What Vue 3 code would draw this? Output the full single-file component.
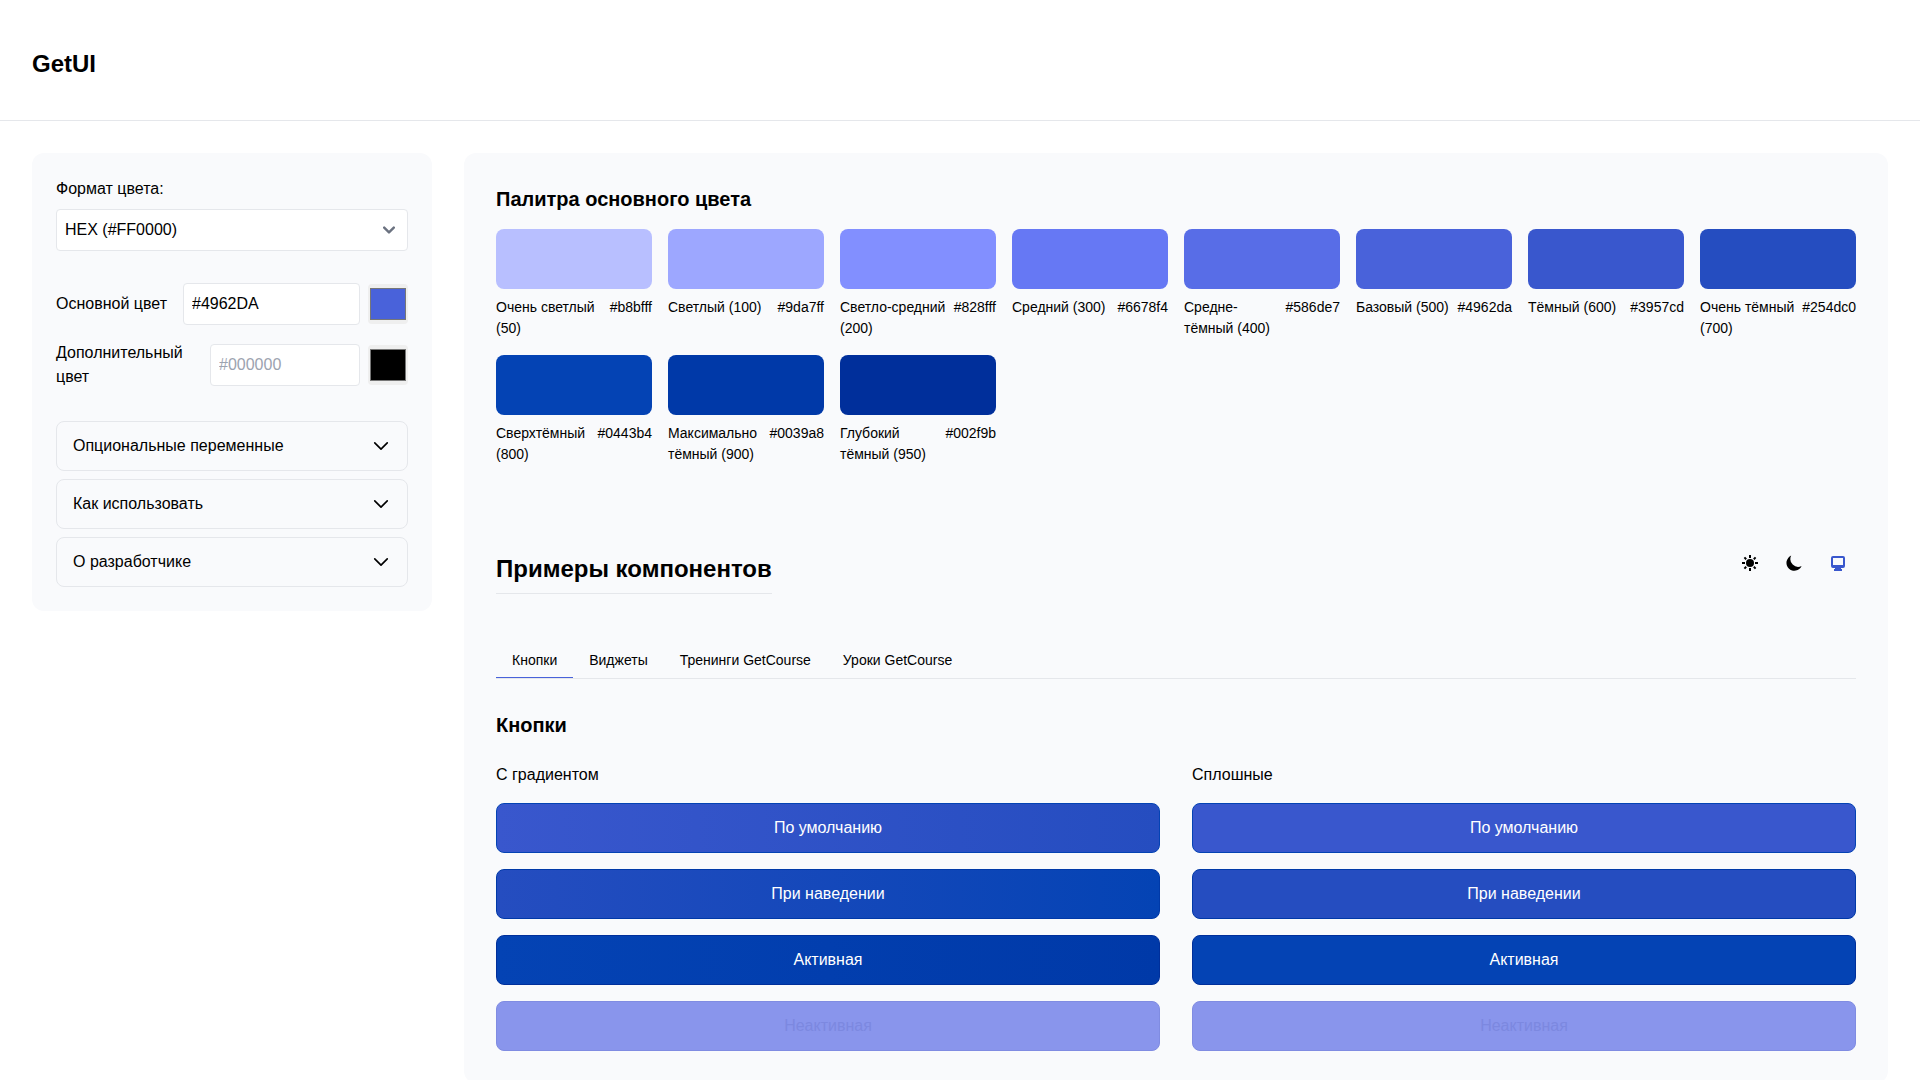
<script setup>
import { ref } from 'vue'

const format = ref('hex')
const primary = ref('#4962DA')
const secondary = ref('')
const theme = ref('system')
const activeTab = ref('Кнопки')

const sections = ['Опциональные переменные', 'Как использовать', 'О разработчике']

const palette = [
  { name: 'Очень светлый (50)', hex: '#b8bfff' },
  { name: 'Светлый (100)', hex: '#9da7ff' },
  { name: 'Светло-средний (200)', hex: '#828fff' },
  { name: 'Средний (300)', hex: '#6678f4' },
  { name: 'Средне-тёмный (400)', hex: '#586de7' },
  { name: 'Базовый (500)', hex: '#4962da' },
  { name: 'Тёмный (600)', hex: '#3957cd' },
  { name: 'Очень тёмный (700)', hex: '#254dc0' },
  { name: 'Сверхтёмный (800)', hex: '#0443b4' },
  { name: 'Максимально тёмный (900)', hex: '#0039a8' },
  { name: 'Глубокий тёмный (950)', hex: '#002f9b' },
]

const tabs = ['Кнопки', 'Виджеты', 'Тренинги GetCourse', 'Уроки GetCourse']

const states = [
  { id: 'default', label: 'По умолчанию' },
  { id: 'hover', label: 'При наведении' },
  { id: 'active', label: 'Активная' },
  { id: 'disabled', label: 'Неактивная' },
]

const groups = [
  { id: 'gradient', title: 'С градиентом' },
  { id: 'solid', title: 'Сплошные' },
]
</script>

<template>
  <div class="page">
    <header class="header">
      <h1>GetUI</h1>
    </header>

    <div class="layout">
      <aside class="sidebar">
        <div class="field">
          <label for="format">Формат цвета:</label>
          <select id="format" v-model="format" class="control select">
            <option value="hex">HEX (#FF0000)</option>
            <option value="rgb">RGB (255, 0, 0)</option>
          </select>
        </div>

        <div class="colors">
          <div class="color-row">
            <label for="primary">Основной цвет</label>
            <div class="color-inputs">
              <input id="primary" v-model="primary" type="text" class="control" placeholder="#000000" />
              <input type="color" value="#4962da" aria-label="Выбор основного цвета" />
            </div>
          </div>
          <div class="color-row">
            <label for="secondary">Дополнительный цвет</label>
            <div class="color-inputs">
              <input id="secondary" v-model="secondary" type="text" class="control" placeholder="#000000" />
              <input type="color" value="#000000" aria-label="Выбор дополнительного цвета" />
            </div>
          </div>
        </div>

        <div class="accordion">
          <button v-for="s in sections" :key="s" type="button" class="accordion-item" aria-expanded="false">
            <span>{{ s }}</span>
            <svg width="20" height="20" viewBox="0 0 24 24" fill="none" stroke="currentColor" stroke-width="2" stroke-linecap="round" stroke-linejoin="round" aria-hidden="true">
              <path d="m19.5 8.25-7.5 7.5-7.5-7.5" />
            </svg>
          </button>
        </div>
      </aside>

      <main class="content">
        <section class="palette-section">
          <h3>Палитра основного цвета</h3>
          <div class="palette">
            <div v-for="c in palette" :key="c.hex" class="tone">
              <div class="tone-fill" :style="{ backgroundColor: c.hex }"></div>
              <div class="tone-text">
                <span>{{ c.name }}</span>
                <span>{{ c.hex }}</span>
              </div>
            </div>
          </div>
        </section>

        <div class="examples-head">
          <h2>Примеры компонентов</h2>
          <div class="themes">
            <button type="button" aria-label="Светлая тема" :class="{ chosen: theme === 'light' }" @click="theme = 'light'">
              <svg width="16" height="16" viewBox="0 0 16 16" fill="currentColor" aria-hidden="true">
                <circle cx="8" cy="8" r="4" />
                <path d="M8 0v3M8 13v3M0 8h3M13 8h3M2.4 2.4l1.8 1.8M11.8 11.8l1.8 1.8M2.4 13.6l1.8-1.8M11.8 4.2l1.8-1.8" stroke="currentColor" stroke-width="2" />
              </svg>
            </button>
            <button type="button" aria-label="Тёмная тема" :class="{ chosen: theme === 'dark' }" @click="theme = 'dark'">
              <svg width="16" height="16" viewBox="0 0 16 16" fill="currentColor" aria-hidden="true">
                <path d="M5.2.6A7.9 7.9 0 1 0 15.6 11 7.8 7.8 0 0 1 5.2.6Z" />
              </svg>
            </button>
            <button type="button" aria-label="Системная тема" :class="{ chosen: theme === 'system' }" @click="theme = 'system'">
              <svg width="16" height="16" viewBox="0 0 16 16" fill="currentColor" fill-rule="evenodd" aria-hidden="true">
                <path d="M3 1h10a2 2 0 0 1 2 2v8a2 2 0 0 1-2 2h-2v1h1v2H4v-2h1v-1H3a2 2 0 0 1-2-2V3a2 2 0 0 1 2-2Zm0 2v7h10V3H3Z" />
              </svg>
            </button>
          </div>
        </div>

        <nav class="tabs" role="tablist">
          <button v-for="t in tabs" :key="t" type="button" role="tab" :aria-selected="t === activeTab" @click="activeTab = t">{{ t }}</button>
        </nav>

        <section class="buttons-section">
          <h3>Кнопки</h3>
          <div class="groups">
            <div v-for="g in groups" :key="g.id" class="group" :class="g.id">
              <p>{{ g.title }}</p>
              <button v-for="s in states" :key="s.id" type="button" class="btn" :class="s.id" :disabled="s.id === 'disabled'">{{ s.label }}</button>
            </div>
          </div>
        </section>
      </main>
    </div>
  </div>
</template>

<style>
body {
  margin: 0;
  background: #fff;
}
</style>

<style scoped>
.page,
.page * {
  box-sizing: border-box;
}

.page {
  color: #000;
  font-family: "Liberation Sans", Arial, sans-serif;
  font-size: 16px;
  line-height: 24px;
}

h1,
h2,
h3,
p {
  margin: 0;
}

button,
input,
select {
  margin: 0;
  font: inherit;
  color: inherit;
}

button {
  padding: 0;
  border: 0;
  background: none;
  cursor: pointer;
}

.header {
  padding: 48px 32px 40px;
  border-bottom: 1px solid #e5e7eb;
}

h1,
h2 {
  font-size: 24px;
  line-height: 32px;
}

h3 {
  font-size: 20px;
  line-height: 28px;
}

.layout {
  display: grid;
  grid-template-columns: 400px minmax(0, 1fr);
  align-items: start;
  gap: 32px;
  padding: 32px;
}

.sidebar,
.content {
  border-radius: 12px;
  background: #f9fafc;
}

.sidebar {
  display: flex;
  flex-direction: column;
  gap: 32px;
  padding: 24px;
}

.field {
  display: flex;
  flex-direction: column;
  gap: 8px;
}

.control {
  width: 100%;
  min-width: 0;
  height: 42px;
  padding: 8px;
  border: 1px solid #e5e7eb;
  border-radius: 4px;
  background-color: #fff;
}

.control::placeholder {
  color: #9ca3af;
}

.select {
  appearance: none;
  background-image: url("data:image/svg+xml,%3Csvg xmlns='http://www.w3.org/2000/svg' fill='none' viewBox='0 0 10 6'%3E%3Cpath stroke='%236b7280' stroke-linecap='round' stroke-linejoin='round' stroke-width='2' d='m1 1 4 4 4-4'/%3E%3C/svg%3E");
  background-repeat: no-repeat;
  background-position: right 12px center;
  background-size: 12px 12px;
}

.colors {
  display: flex;
  flex-direction: column;
  gap: 16px;
}

.color-row {
  display: flex;
  align-items: center;
  gap: 16px;
}

.color-row label {
  flex: none;
  max-width: 138px;
}

.color-inputs {
  display: flex;
  flex: 1;
  align-items: center;
  gap: 8px;
  min-width: 0;
}

input[type="color"] {
  flex: none;
  width: 40px;
  height: 40px;
  padding: 0;
  border: 0;
  border-radius: 4px;
  background: #efefef;
}

.accordion {
  display: flex;
  flex-direction: column;
  gap: 8px;
}

.accordion-item {
  display: flex;
  align-items: center;
  justify-content: space-between;
  padding: 12px 16px;
  border: 1px solid #e5e7eb;
  border-radius: 8px;
  text-align: left;
}

.content {
  padding: 32px;
}

.palette-section {
  display: flex;
  flex-direction: column;
  gap: 16px;
}

.palette {
  display: grid;
  grid-template-columns: repeat(8, minmax(0, 1fr));
  gap: 16px;
}

.tone {
  display: flex;
  flex-direction: column;
  gap: 8px;
}

.tone-fill {
  height: 60px;
  border-radius: 8px;
}

.tone-text {
  display: flex;
  justify-content: space-between;
  font-size: 14px;
  line-height: 21px;
}

.examples-head {
  display: flex;
  align-items: flex-start;
  justify-content: space-between;
  margin-top: 80px;
}

h2 {
  margin-top: 8px;
  padding-bottom: 8px;
  border-bottom: 1px solid #e5e7eb;
}

.themes {
  display: flex;
  gap: 8px;
}

.themes button {
  display: flex;
  padding: 10px;
}

.themes .chosen {
  color: #3957cd;
}

.tabs {
  display: flex;
  margin-top: 48px;
  border-bottom: 1px solid #e5e7eb;
}

.tabs button {
  padding: 8px 16px 7px;
  border-bottom: 1px solid transparent;
  font-size: 14px;
  line-height: 20px;
}

.tabs button[aria-selected="true"] {
  border-bottom-color: #4962da;
}

.buttons-section {
  display: flex;
  flex-direction: column;
  gap: 24px;
  margin-top: 32px;
}

.groups {
  display: grid;
  grid-template-columns: repeat(2, minmax(0, 1fr));
  gap: 32px;
}

.group {
  display: flex;
  flex-direction: column;
  gap: 16px;
}

.btn {
  padding: 12px 24px;
  border: 1px solid #0443b4;
  border-radius: 8px;
  color: #fff;
}

.gradient .default {
  background: linear-gradient(to right, #3957cd, #254dc0) border-box;
}

.gradient .hover {
  background: linear-gradient(to right, #254dc0, #0443b4) border-box;
}

.gradient .active {
  background: linear-gradient(to right, #0443b4, #0039a8) border-box;
}

.solid .default {
  background: #3957cd;
}

.solid .hover {
  background: #254dc0;
}

.solid .active {
  background: #0443b4;
}

.btn.hover {
  border-color: #0039a8;
}

.btn.active {
  border-color: #002f9b;
}

.btn.disabled {
  border-color: #808ce2;
  background: #8995ec;
  color: #7c88e0;
  cursor: not-allowed;
}
</style>
